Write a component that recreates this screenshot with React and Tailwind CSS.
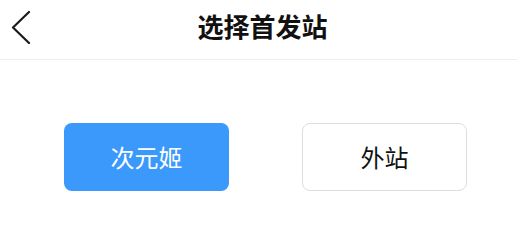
import React from "react";

const ChooseStation = () => {
  return (
    <div className="w-[517px] h-[231px] bg-white font-['Noto_Sans_CJK_SC',sans-serif]">
      {/* Header */}
      <div className="relative flex items-center justify-center h-[60px] border-b border-[#eeeeee]">
        <button className="absolute left-[10px] top-[9px] w-[24px] h-[36px] flex items-center">
          <svg width="22" height="34" viewBox="0 0 22 34" fill="none">
            <path d="M19 2 L3 17.5 L19 33" stroke="#1a1a1a" strokeWidth="2.2" strokeLinecap="round" strokeLinejoin="round" />
          </svg>
        </button>
        <h1 className="text-[26px] leading-none font-bold text-[#111111] -mt-[7px] pl-[8px]">选择首发站</h1>
      </div>

      {/* Options */}
      <div className="flex pl-[64px] pt-[63px] gap-[73px]">
        <button className="w-[165px] h-[68px] rounded-[8px] bg-[#3a99fb] text-white text-[24px] leading-none">
          次元姬
        </button>
        <button className="w-[165px] h-[68px] rounded-[8px] bg-white border border-[#dddddd] text-[#111111] text-[24px] leading-none">
          外站
        </button>
      </div>
    </div>
  );
};

export default ChooseStation;
